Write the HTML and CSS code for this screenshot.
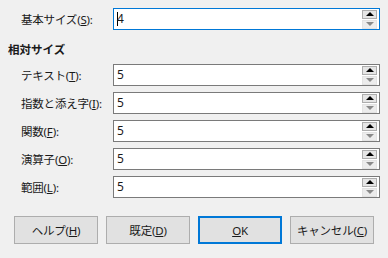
FILE: index.html
```html
<!DOCTYPE html>
<html lang="ja">
<head>
  <meta charset="UTF-8" />
  <title>フォントサイズ</title>
  <link rel="stylesheet" href="styles.css">
</head>
<body>

  <!-- 基本サイズ -->
  <div class="fila fila-base">
    <label>基本サイズ(<u>S</u>):</label>
    <div class="campo activo">
      <span class="cursor"></span><span class="valor">4</span>
      <div class="spin"><span class="arriba"></span><span class="abajo"></span></div>
    </div>
  </div>

  <!-- 相対サイズ -->
  <div class="titulo">相対サイズ</div>

  <div class="fila">
    <label>テキスト(<u>T</u>):</label>
    <div class="campo"><span class="valor">5</span>
      <div class="spin"><span class="arriba"></span><span class="abajo"></span></div>
    </div>
  </div>
  <div class="fila">
    <label>指数と添え字(<u>I</u>):</label>
    <div class="campo"><span class="valor">5</span>
      <div class="spin"><span class="arriba"></span><span class="abajo"></span></div>
    </div>
  </div>
  <div class="fila">
    <label>関数(<u>F</u>):</label>
    <div class="campo"><span class="valor">5</span>
      <div class="spin"><span class="arriba"></span><span class="abajo"></span></div>
    </div>
  </div>
  <div class="fila">
    <label>演算子(<u>O</u>):</label>
    <div class="campo"><span class="valor">5</span>
      <div class="spin"><span class="arriba"></span><span class="abajo"></span></div>
    </div>
  </div>
  <div class="fila">
    <label>範囲(<u>L</u>):</label>
    <div class="campo"><span class="valor">5</span>
      <div class="spin"><span class="arriba"></span><span class="abajo"></span></div>
    </div>
  </div>

  <!-- Botones -->
  <div class="botones">
    <button>ヘルプ(<u>H</u>)</button>
    <button>既定(<u>D</u>)</button>
    <button class="principal"><u>O</u>K</button>
    <button>キャンセル(<u>C</u>)</button>
  </div>

</body>
</html>
```
FILE: styles.css
```css
body {
  margin: 0;
  background: #f0f0f0;
  font-family: "Noto Sans", "Noto Sans CJK JP", sans-serif;
  font-size: 11.5px;
  color: #1a1a1a;
  width: 388px;
  height: 258px;
  overflow: hidden;
}

.fila {
  display: flex;
  align-items: center;
  height: 22px;
  margin: 6px 8px 0 21px;
}

.fila-base {
  margin-top: 8px;
}

.fila label {
  width: 92px;
  letter-spacing: -0.2px;
}

.campo {
  flex: 1;
  height: 20px;
  border: 1px solid #7a7a7a;
  background: white;
  display: flex;
  align-items: center;
  padding-left: 3px;
  position: relative;
}

.campo.activo {
  border-color: #0078d7;
}

.cursor {
  width: 1px;
  height: 14px;
  background: #000;
  margin-right: -1px;
}

.valor {
  flex: 1;
  line-height: 20px;
  font-size: 12px;
}

.spin {
  display: flex;
  flex-direction: column;
  gap: 1px;
  margin-right: 2px;
}

.spin span {
  width: 13px;
  height: 7px;
  display: flex;
  align-items: center;
  justify-content: center;
}

.spin .arriba {
  background: #e5e5e5;
  border: 1px solid #adadad;
}

.spin .arriba::after {
  content: "";
  border-left: 4px solid transparent;
  border-right: 4px solid transparent;
  border-bottom: 4px solid #000;
}

.spin .abajo {
  background: #ececec;
  border: 1px solid #e3e3e3;
}

.spin .abajo::after {
  content: "";
  border-left: 4px solid transparent;
  border-right: 4px solid transparent;
  border-top: 4px solid #8a8a8a;
}

.titulo {
  font-weight: bold;
  height: 16px;
  line-height: 16px;
  margin: 12px 0 0 8px;
}

.botones {
  display: flex;
  gap: 8px;
  margin: 18px 0 0 14px;
}

.botones button {
  width: 84px;
  height: 28px;
  background: #e1e1e1;
  border: 1px solid #adadad;
  font-family: inherit;
  font-size: 11.5px;
  color: #1a1a1a;
  padding: 0;
  letter-spacing: -0.2px;
}

.botones button.principal {
  border: 2px solid #0078d7;
}
```
